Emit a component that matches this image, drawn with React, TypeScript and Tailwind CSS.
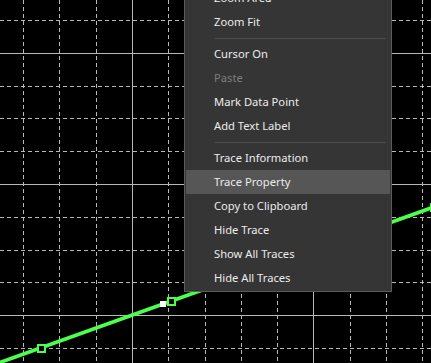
const vLines = Array.from({ length: 12 }, (_, i) => Math.round(23 + 36.3 * i));
const hLines = Array.from({ length: 11 }, (_, i) => Math.round(20 + 32.8 * i));

const lineY = (x: number) => 347.7 - 0.3584 * (x - 41);

type Item = { label: string; disabled?: boolean; active?: boolean } | 'sep';

const items: Item[] = [
  { label: 'Zoom Area' },
  { label: 'Zoom Fit' },
  'sep',
  { label: 'Cursor On' },
  { label: 'Paste', disabled: true },
  { label: 'Mark Data Point' },
  { label: 'Add Text Label' },
  'sep',
  { label: 'Trace Information' },
  { label: 'Trace Property', active: true },
  { label: 'Copy to Clipboard' },
  { label: 'Hide Trace' },
  { label: 'Show All Traces' },
  { label: 'Hide All Traces' },
];

// hollow square data point marker
const Marker = ({ x }: { x: number }) => (
  <rect
    x={x - 3.5}
    y={Math.round(lineY(x)) - 3.5}
    width={7}
    height={7}
    fill="#000"
    stroke="#4dff4d"
    strokeWidth={2}
  />
);

const Chart = () => (
  <svg width={431} height={363} className="block" shapeRendering="crispEdges">
    <rect width={431} height={363} fill="#000" />
    {vLines.map((x, i) => (
      <line
        key={`v${i}`}
        x1={x + 0.5}
        x2={x + 0.5}
        y1={0}
        y2={363}
        stroke="#b8b8b8"
        strokeDasharray={i === 3 || i === 8 ? undefined : '4 3'}
      />
    ))}
    {hLines.map((y, i) => (
      <line
        key={`h${i}`}
        x1={0}
        x2={431}
        y1={y + 0.5}
        y2={y + 0.5}
        stroke="#b8b8b8"
        strokeDasharray={i === 1 || i === 5 || i === 9 ? undefined : '4 3'}
      />
    ))}
    <line
      x1={-5}
      y1={lineY(-5)}
      x2={440}
      y2={lineY(440)}
      stroke="#4dff4d"
      strokeWidth={3.8}
      shapeRendering="auto"
    />
    <Marker x={41} />
    <Marker x={171} />
    <Marker x={301} />
    <Marker x={434} />
    <rect x={160} y={301} width={6} height={6} fill="#fff" />
  </svg>
);

export default function App() {
  return (
    <div className="relative h-[363px] w-[431px] overflow-hidden bg-black">
      <Chart />
      <div
        className="absolute left-[184px] top-[-16px] w-[208px] border border-[#5a5a5a] bg-[#353535] p-px text-[11.2px] text-[#ececec]"
        style={{ fontFamily: '"Noto Sans", "Open Sans", sans-serif' }}
      >
        {items.map((it, i) =>
          it === 'sep' ? (
            <div key={i} className="flex h-2 items-center pl-[29px] pr-[4px]">
              <div className="h-px w-full bg-[#4c4c4c]" />
            </div>
          ) : (
            <div
              key={i}
              className={`flex h-6 items-center pl-[28px] pt-px ${it.active ? 'bg-[#565656]' : ''} ${
                it.disabled ? 'text-[#7d7d7d]' : ''
              }`}
            >
              {it.label}
            </div>
          )
        )}
      </div>
    </div>
  );
}
